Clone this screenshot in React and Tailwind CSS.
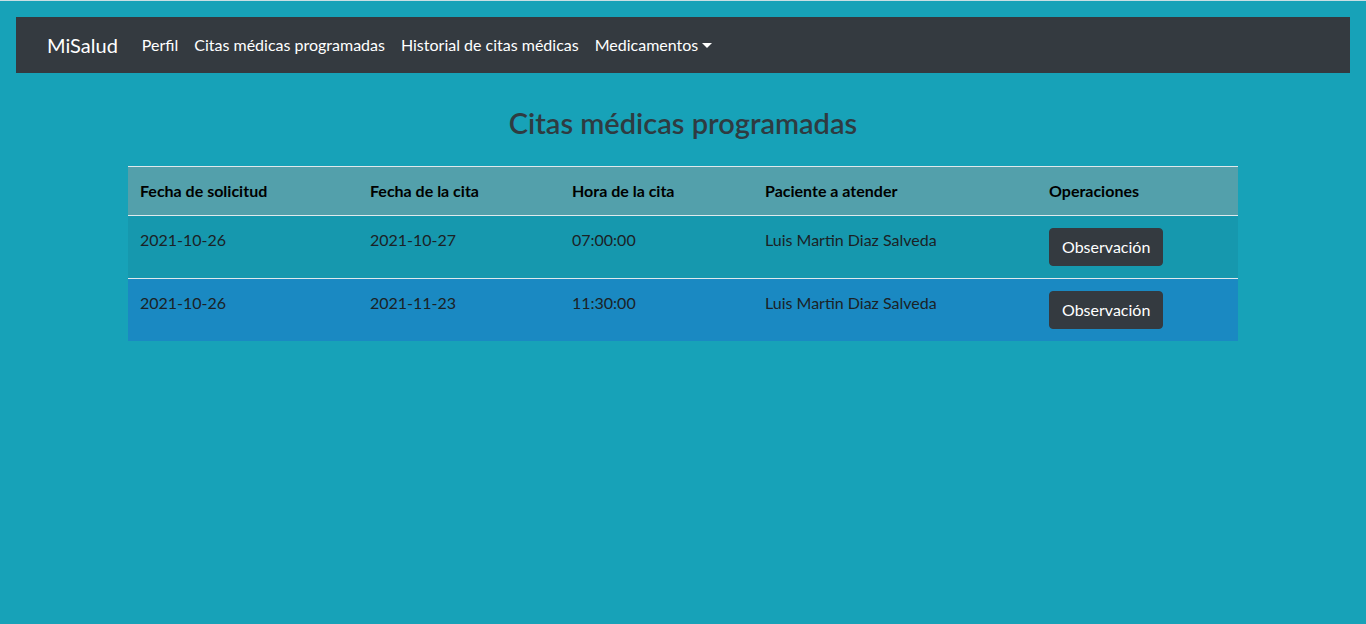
import React from 'react';

const rows = [
    { solicitud: '2021-10-26', fecha: '2021-10-27', hora: '07:00:00', paciente: 'Luis Martin Diaz Salveda', bg: 'bg-[#1698ae]' },
    { solicitud: '2021-10-26', fecha: '2021-11-23', hora: '11:30:00', paciente: 'Luis Martin Diaz Salveda', bg: 'bg-[#1a89c2]' },
];

export default function App() {
    return (
        <div className="min-h-screen bg-[#17a2b8] border-t border-[#c9dfe4] font-['Lato','Open_Sans',sans-serif] text-[16px] text-[#1b2226]">
            {/* Navbar */}
            <nav className="mx-4 mt-4 h-14 bg-[#343a40] flex items-center px-[31px]">
                <span className="text-[20px] text-white mr-4">MiSalud</span>
                <ul className="flex items-center">
                    <li className="px-2 text-white">Perfil</li>
                    <li className="px-2 text-white">Citas médicas programadas</li>
                    <li className="px-2 text-white">Historial de citas médicas</li>
                    <li className="px-2 text-white flex items-center">
                        Medicamentos
                        <span className="ml-[4px] w-0 h-0 border-x-[5px] border-x-transparent border-t-[5px] border-t-white" />
                    </li>
                </ul>
            </nav>

            {/* Content */}
            <div className="w-[1110px] mx-auto pt-[33px]">
                <h2 className="text-center text-[29px] leading-[1.2] font-semibold text-[#2f3b41] mb-[25px]">
                    Citas médicas programadas
                </h2>

                <table className="w-full border-collapse text-left">
                    <thead>
                        <tr className="bg-[#53a0ab] border-t border-[#dfe9ec] text-black">
                            <th className="p-3 font-bold w-[230px]">Fecha de solicitud</th>
                            <th className="p-3 font-bold w-[202px]">Fecha de la cita</th>
                            <th className="p-3 font-bold w-[193px]">Hora de la cita</th>
                            <th className="p-3 font-bold w-[284px]">Paciente a atender</th>
                            <th className="p-3 font-bold">Operaciones</th>
                        </tr>
                    </thead>
                    <tbody>
                        {rows.map((r, i) => (
                            <tr key={i} className={`${r.bg} border-t border-[#dfe9ec]`}>
                                <td className="p-3 align-top">{r.solicitud}</td>
                                <td className="p-3 align-top">{r.fecha}</td>
                                <td className="p-3 align-top">{r.hora}</td>
                                <td className="p-3 align-top">{r.paciente}</td>
                                <td className="p-3 align-top">
                                    <button className="bg-[#343a40] border border-[#343a40] text-white rounded px-3 py-1.5 leading-[1.5]">
                                        Observación
                                    </button>
                                </td>
                            </tr>
                        ))}
                    </tbody>
                </table>
            </div>
        </div>
    );
}
